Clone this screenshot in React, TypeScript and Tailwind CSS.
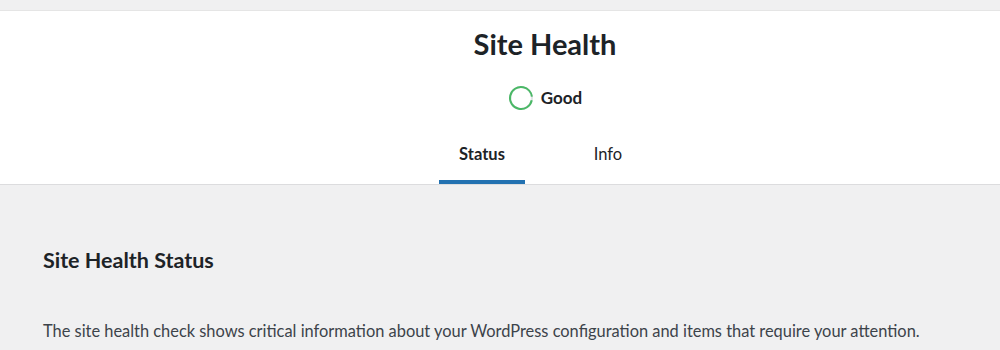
export default function App() {
  return (
    <div
      className="w-[1000px] h-[350px] overflow-hidden bg-[#f0f0f1] text-[#3c434a]"
      style={{ fontFamily: 'Lato, "Noto Sans", sans-serif' }}
    >
      <div className="h-[11px] border-b border-[#e5e5e5]" />
      <header className="bg-white border-b border-[#dcdcde] flex flex-col items-center pl-[90px]">
        <h1 className="mt-[13px] text-[29px] leading-[40px] font-bold text-[#1d2327]">
          Site Health
        </h1>
        <div className="mt-[21px] flex items-center gap-[7px]">
          <svg width="26" height="26" viewBox="0 0 26 26">
            <circle cx="13" cy="13" r="11" fill="none" stroke="#e2e4e7" strokeWidth="2" />
            <circle
              cx="13"
              cy="13"
              r="11"
              fill="none"
              stroke="#4ab866"
              strokeWidth="2"
              strokeDasharray="65 100"
              transform="rotate(12 13 13)"
            />
          </svg>
          <span className="text-[17px] font-bold text-[#1d2327]">Good</span>
        </div>
        <nav className="mt-[27px] flex text-[16.5px]">
          <a className="w-[86px] h-[46px] flex justify-center pt-[4px] font-bold text-[#1d2327] border-b-4 border-[#2271b1]">
            Status
          </a>
          <a className="w-[86px] h-[46px] flex justify-center pt-[4px] ml-[40px] text-[#1d2327]">
            Info
          </a>
        </nav>
      </header>
      <main className="px-[43px] pt-[60px]">
        <h2 className="text-[21.5px] leading-[30px] font-bold text-[#1d2327]">
          Site Health Status
        </h2>
        <p className="mt-[44px] text-[16.4px] leading-[24px]">
          The site health check shows critical information about your WordPress configuration
          and items that require your attention.
        </p>
      </main>
    </div>
  );
}
